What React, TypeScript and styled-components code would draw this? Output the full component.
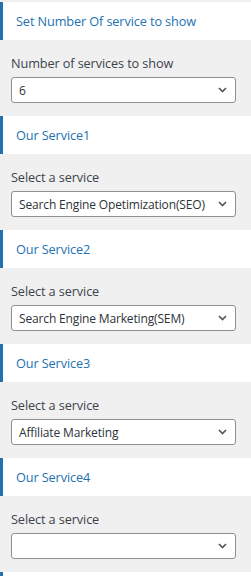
import React from "react";
import styled, { createGlobalStyle } from "styled-components";

const GlobalStyle = createGlobalStyle`
  html, body {
    margin: 0;
    padding: 0;
    background: #f0f0f1;
    font-family: "Open Sans", "Noto Sans", sans-serif;
  }
`;

const Panel = styled.div`
  width: 251px;
  padding-top: 2px;
  background: #f0f0f1;
`;

const SectionTitle = styled.h3`
  margin: 0;
  height: 38px;
  display: flex;
  align-items: center;
  padding-left: 13px;
  background: #fff;
  border-left: 3px solid #2271b1;
  color: #2271b1;
  font-size: 12.7px;
  letter-spacing: -0.1px;
  font-weight: 400;
`;

const Control = styled.div`
  padding: 14px 15px 13px 11px;
`;

const Label = styled.label`
  display: block;
  margin-bottom: 5px;
  color: #3c434a;
  font-size: 12.7px;
  letter-spacing: -0.1px;
  line-height: 18px;
`;

const SelectBox = styled.div`
  position: relative;
  height: 26px;
  box-sizing: border-box;
  border: 1px solid #8c8f94;
  border-radius: 3px;
  background: #fff;
  display: flex;
  align-items: center;
  padding: 0 26px 0 7px;
  color: #2c3338;
  font-size: 12px;
  letter-spacing: -0.15px;
  white-space: nowrap;
  overflow: hidden;
`;

const Chevron = styled.svg`
  position: absolute;
  right: 8px;
  top: 50%;
  margin-top: -3px;
`;

const Select = ({ value }: { value: string }) => (
  <SelectBox>
    {value}
    <Chevron width="9" height="6" viewBox="0 0 9 6">
      <path d="M1 1 L4.5 4.5 L8 1" fill="none" stroke="#50575e" strokeWidth="1.7" />
    </Chevron>
  </SelectBox>
);

const sections = [
  { title: "Set Number Of service to show", label: "Number of services to show", value: "6" },
  { title: "Our Service1", label: "Select a service", value: "Search Engine Opetimization(SEO)" },
  { title: "Our Service2", label: "Select a service", value: "Search Engine Marketing(SEM)" },
  { title: "Our Service3", label: "Select a service", value: "Affiliate Marketing" },
  { title: "Our Service4", label: "Select a service", value: "" },
  { title: "Our Service5", label: "Select a service", value: "" },
];

const App = () => (
  <>
    <GlobalStyle />
    <Panel>
      {sections.map((s) => (
        <section key={s.title}>
          <SectionTitle>{s.title}</SectionTitle>
          <Control>
            <Label>{s.label}</Label>
            <Select value={s.value} />
          </Control>
        </section>
      ))}
    </Panel>
  </>
);

export default App;
